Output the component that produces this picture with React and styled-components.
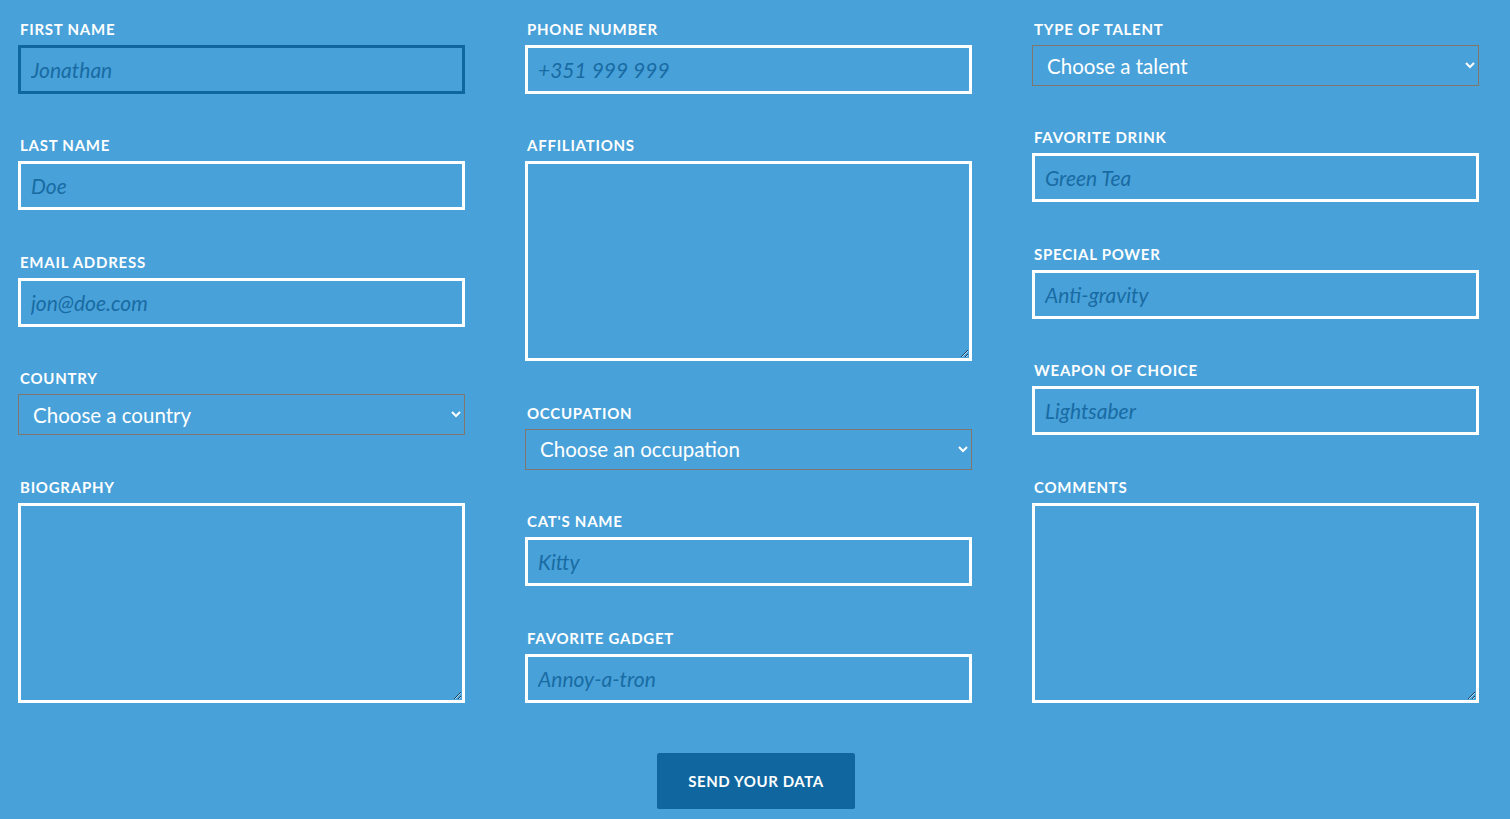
import React from "react";
import styled, { createGlobalStyle } from "styled-components";

const GlobalStyle = createGlobalStyle`
  html, body {
    margin: 0;
    padding: 0;
    background: #48a1d9;
  }
  body {
    font-family: "Lato", "Open Sans", sans-serif;
  }
  * {
    box-sizing: border-box;
  }
`;

const Form = styled.form`
  width: 1510px;
  min-height: 819px;
  padding: 20px 31px 0 18px;
  background: #48a1d9;
`;

const Columns = styled.div`
  display: grid;
  grid-template-columns: repeat(3, 447px);
  column-gap: 60px;
`;

const Column = styled.div`
  display: flex;
  flex-direction: column;
`;

const Field = styled.div`
  display: flex;
  flex-direction: column;
  margin-bottom: 42.4px;
`;

const Label = styled.label`
  display: block;
  padding-left: 2px;
  margin-bottom: 7px;
  font-size: 15px;
  line-height: 18px;
  font-weight: 700;
  letter-spacing: 0.75px;
  text-transform: uppercase;
  color: #ffffff;
`;

const controlText = `
  font-family: "Lato", "Open Sans", sans-serif;
  color: #ffffff;
  background: transparent;
  outline: none;
`;

const Input = styled.input`
  ${controlText}
  width: 100%;
  height: 49px;
  padding: 0 10px;
  border: 3px solid ${(p) => (p.$active ? "#10679f" : "#ffffff")};
  font-size: 21px;
  caret-color: #ffffff;

  &::placeholder {
    color: #196ba3;
    font-style: italic;
    opacity: 1;
  }
`;

const TextArea = styled.textarea`
  ${controlText}
  width: 100%;
  height: 200px;
  padding: 10px;
  border: 3px solid #ffffff;
  font-size: 21px;
  resize: vertical;
`;

const Select = styled.select`
  ${controlText}
  width: 100%;
  height: 41px;
  padding: 0 10px;
  border: 1px solid #80776b;
  border-radius: 0;
  font-size: 20.5px;

  option {
    color: #222;
  }
`;

const Footer = styled.div`
  display: flex;
  justify-content: center;
  padding: 8px 0 11px 15px;
`;

const SendButton = styled.button`
  width: 198px;
  height: 56px;
  border: none;
  border-radius: 2px;
  background: #10679f;
  color: #ffffff;
  font-family: "Lato", "Open Sans", sans-serif;
  font-size: 15px;
  font-weight: 700;
  letter-spacing: 0.6px;
  text-transform: uppercase;
  cursor: pointer;
`;

const columns = [
  [
    { label: "First name", type: "text", placeholder: "Jonathan", active: true },
    { label: "Last name", type: "text", placeholder: "Doe" },
    { label: "Email address", type: "email", placeholder: "jon@doe.com" },
    { label: "Country", type: "select", placeholder: "Choose a country" },
    { label: "Biography", type: "textarea" },
  ],
  [
    { label: "Phone number", type: "tel", placeholder: "+351 999 999" },
    { label: "Affiliations", type: "textarea" },
    { label: "Occupation", type: "select", placeholder: "Choose an occupation" },
    { label: "Cat's name", type: "text", placeholder: "Kitty" },
    { label: "Favorite gadget", type: "text", placeholder: "Annoy-a-tron" },
  ],
  [
    { label: "Type of talent", type: "select", placeholder: "Choose a talent" },
    { label: "Favorite drink", type: "text", placeholder: "Green Tea" },
    { label: "Special power", type: "text", placeholder: "Anti-gravity" },
    { label: "Weapon of choice", type: "text", placeholder: "Lightsaber" },
    { label: "Comments", type: "textarea" },
  ],
];

const Control = ({ field, id }) => {
  if (field.type === "textarea") return <TextArea id={id} />;
  if (field.type === "select")
    return (
      <Select id={id} defaultValue="">
        <option value="" disabled>
          {field.placeholder}
        </option>
      </Select>
    );
  return (
    <Input
      id={id}
      type={field.type}
      placeholder={field.placeholder}
      $active={field.active}
      autoFocus={field.active}
    />
  );
};

const App = () => {
  return (
    <>
      <GlobalStyle />
      <Form onSubmit={(e) => e.preventDefault()}>
        <Columns>
          {columns.map((col, i) => (
            <Column key={i}>
              {col.map((field) => {
                const id = field.label.toLowerCase().replace(/\W+/g, "-");
                return (
                  <Field key={id}>
                    <Label htmlFor={id}>{field.label}</Label>
                    <Control field={field} id={id} />
                  </Field>
                );
              })}
            </Column>
          ))}
        </Columns>
        <Footer>
          <SendButton type="submit">Send your data</SendButton>
        </Footer>
      </Form>
    </>
  );
};

export default App;
